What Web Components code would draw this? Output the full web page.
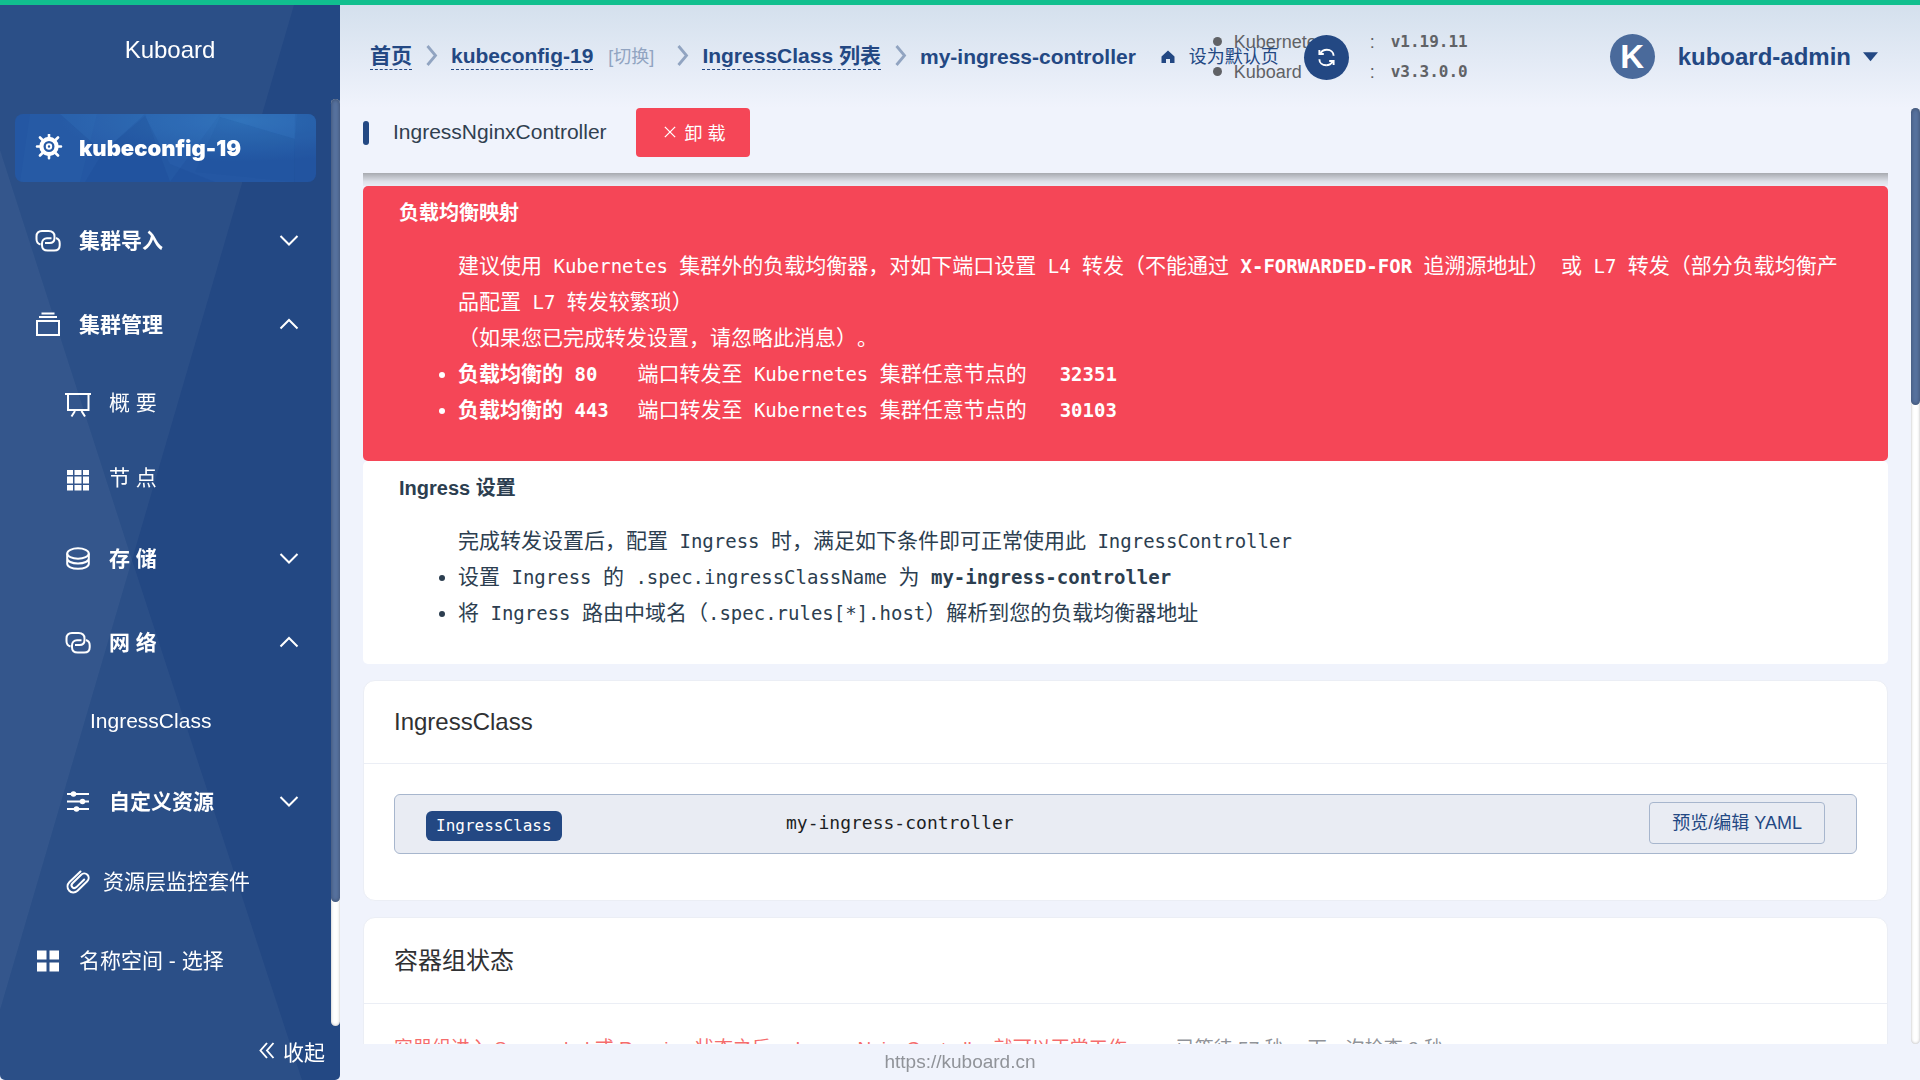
<!DOCTYPE html>
<html lang="zh-CN">
<head>
<meta charset="utf-8">
<title>Kuboard</title>
<style>
  html, body { height: 100%; }
  body {
    margin: 0;
    overflow: hidden;
    background: #f0f3fc;
    color: #2c3e50;
    font-family: "Liberation Sans", "Noto Sans CJK SC", sans-serif;
    font-size: 21px;
    text-spacing-trim: space-all;
    --primary: #234883;
    --danger: #f54657;
    --mono: "DejaVu Sans Mono", "Noto Sans CJK SC", monospace;
  }
</style>
</head>
<body>
<kb-app></kb-app>

<script>
const ICONS = {
  helm: '<g fill="none" stroke="currentColor"><circle cx="14" cy="12.500" r="7.600" stroke-width="4.200"/><circle cx="14" cy="12.500" r="2.200" stroke-width="2"/><path stroke-width="2.600" stroke-linecap="round" d="M14 .8v3M14 21.200v3M2 12.500h3M23 12.500h3M5 3.500l2.500 2.500M20.500 19l2.500 2.500M23 3.500L20.500 6M7.500 19L5 21.500"/></g>',
  link: '<g fill="none" stroke="currentColor" stroke-width="2"><path d="M6.500 17.500C3.700 16.800 2.500 14.800 2.500 12V9.500C2.500 6 4.800 4 8 4h6.500C18 4 20.500 6 20.500 9.500V11c0 3.300-2 5-5 5H11"/><path d="M22 11c2.500.8 3.700 2.700 3.700 5.200v2c0 3.300-2.300 5.300-5.500 5.300h-6.500c-3.400 0-5.700-2-5.700-5.300v-1.700c0-3.300 2-5.200 5-5.200h4.500"/></g>',
  stack: '<g fill="none" stroke="currentColor" stroke-width="2"><path d="M3 10h22v14H3zM5 6h18M7.500 2.500h13"/></g>',
  board: '<g fill="none" stroke="currentColor" stroke-width="2"><path d="M1 3h26M4 3v16h20.500V3M11 20l-3.500 5.500M17.500 20l3.500 5.500"/></g>',
  grid9: '<path fill="currentColor" d="M3 4h6v5H3zM10.500 4h7v5h-7zM19 4h6v5h-6zM3 10.500h6v7H3zM10.500 10.500h7v7h-7zM19 10.500h6v7h-6zM3 19h6v5.500H3zM10.500 19h7v5.500h-7zM19 19h6v5.500h-6z"/>',
  coins: '<g fill="none" stroke="currentColor" stroke-width="2"><ellipse cx="14" cy="8.500" rx="10.800" ry="5.200"/><path d="M3.200 8.500v5c0 2.700 4.500 5 10.800 5s10.800-2.300 10.800-5v-5M3.200 13.500v5.300c0 2.700 4.500 5 10.800 5s10.800-2.300 10.800-5v-5.300"/></g>',
  sliders: '<path stroke="currentColor" stroke-width="2" d="M3 6h22M3 13.500h22M3 21h22"/><g fill="currentColor"><circle cx="9.500" cy="6" r="2.800"/><circle cx="18.500" cy="13.500" r="2.800"/><circle cx="12.500" cy="21" r="2.800"/></g>',
  clip: '<path fill="none" stroke="currentColor" stroke-width="2" stroke-linecap="round" d="M16.500 3.500L5.500 14c-2.500 2.500-2.500 6-.5 8.500 2.300 2.500 6 2.500 8.500.3L23.200 13.300c1.900-1.900 1.900-4.700.2-6.500-1.800-1.800-4.600-1.700-6.500.1L8.500 15.200c-1.200 1.200-1.200 2.900-.1 4s2.800 1 4-.1l7.800-7.600"/>',
  grid4: '<path fill="currentColor" d="M3 3.500h9.500v9H3zM15.500 3.500H25v9h-9.500zM3 15.500h9.500v9H3zM15.500 15.500H25v9h-9.500z"/>',
  down: '<path fill="none" stroke="currentColor" stroke-width="2" d="M5.500 9L14 17.500 22.500 9"/>',
  up: '<path fill="none" stroke="currentColor" stroke-width="2" d="M5.500 17.500L14 9l8.500 8.500"/>',
  right: '<path fill="none" stroke="currentColor" stroke-width="2.800" d="M9.500 3l8 9.500-8 9.500"/>',
  fold: '<path fill="none" stroke="currentColor" stroke-width="1.900" d="M14 6L7.500 13.500 14 21M20.500 6L14 13.500l6.500 7.500"/>',
  home: '<path fill="currentColor" d="M14 1L1 13v13h9v-8h8v8h9V13z"/>',
  close: '<path fill="none" stroke="currentColor" stroke-width="3" d="M2 2l24 24M26 2L2 26"/>',
  refresh: '<g fill="none" stroke="currentColor" stroke-width="2.800"><path d="M3.500 16.500C3.500 22 8 25.500 13.500 25.500M24.500 11.500C24.500 6 20 2.500 14.500 2.500c-4 0-7.500 2-9.500 5.500"/><path d="M3.500 3v5.800H10M13.500 25.500c4 0 7.500-2 9.500-5.500M24.500 25v-5.800H18"/></g>',
  caret: '<path fill="currentColor" d="M0 6h28L14 23z"/>'
};

function define(name, html) {
  const template = document.createElement('template');
  template.innerHTML = html;
  customElements.define(name, class extends HTMLElement {
    constructor() {
      super();
      this.attachShadow({ mode: 'open' }).append(template.content.cloneNode(true));
    }
  });
}

customElements.define('kb-icon', class extends HTMLElement {
  constructor() {
    super();
    this.attachShadow({ mode: 'open' });
  }
  connectedCallback() {
    this.shadowRoot.innerHTML = `
      <style>
        :host { display: inline-block; width: 28px; height: 28px; flex: none; }
        svg { display: block; width: 100%; height: 100%; }
      </style>
      <svg viewBox="0 0 28 28" aria-hidden="true">${ICONS[this.getAttribute('name')]}</svg>`;
  }
});

customElements.define('kb-menu-item', class extends HTMLElement {
  constructor() {
    super();
    this.attachShadow({ mode: 'open' });
  }
  connectedCallback() {
    const icon = this.getAttribute('icon');
    const arrow = this.getAttribute('arrow');
    this.shadowRoot.innerHTML = `
      <style>
        :host { display: block; color: #fff; line-height: 30px; }
        a { display: flex; align-items: center; gap: 17px; height: 75px; box-sizing: border-box;
            padding: 0 28px 0 34px; color: inherit; text-decoration: none; white-space: nowrap; }
        span { flex: 1; padding-bottom: 4px; }
        :host([tall]) a { height: 84px; }
        :host([tall]) span { padding-bottom: 0; }
        :host([arrow]) { font-weight: bold; }
        :host([level="2"]) a { padding-left: 64px; }
        :host([level="3"]) a { padding-left: 90px; }
        :host([tight]) a { gap: 11px; }
        :host([tight]) span { padding-bottom: 0; }
      </style>
      <a href="#">${icon ? `<kb-icon name="${icon}"></kb-icon>` : ''}<span><slot></slot></span>${arrow ? `<kb-icon name="${arrow}"></kb-icon>` : ''}</a>`;
  }
});

define('kb-scrollbar', `
  <style>
    :host { display: block; flex: none; width: 9px; border-radius: 5px; background: #fff; box-shadow: inset 0 0 3px rgba(0,0,0,.3); }
    div { height: var(--thumb); border-radius: 5px; background: #57729f; box-shadow: inset 0 0 4px rgba(0,0,0,.35); }
  </style>
  <div></div>`);

define('kb-sidebar', `
  <style>
    :host { display: flex; flex-direction: column; position: relative; z-index: 2; width: 340px; flex: none;
            overflow: hidden; border-radius: 0 0 5px 5px; background: var(--primary); color: #fff; }
    .facets { position: absolute; inset: 0; width: 100%; height: 100%; }
    .brand { position: relative; height: 94px; box-sizing: border-box; padding-bottom: 4px; display: flex; align-items: center; justify-content: center; font-size: 24px; }
    .scroll { position: relative; display: flex; flex: 1; min-height: 0; }
    nav { flex: 1; min-width: 0; padding-top: 15px; }
    .cluster { display: flex; align-items: center; gap: 16px; position: relative; overflow: hidden;
               height: 68px; margin: 0 15px 17px; padding: 0 20px; border-radius: 8px;
               background: #2457a3; color: #fff; text-decoration: none;
               font: 900 22px/30px Inter, "DejaVu Sans", sans-serif; }
    .cluster > svg { position: absolute; inset: 0; width: 100%; height: 100%; }
    .cluster > kb-icon, .cluster > span { position: relative; }
    .fold { position: relative; display: flex; align-items: center; justify-content: flex-end; gap: 2px; height: 54px;
            padding: 0 15px 4px 0; border: 0; background: none; color: #fff; font: inherit; }
  </style>
  <svg class="facets" viewBox="0 0 340 1075" preserveAspectRatio="none" aria-hidden="true">
    <path fill="#fff" fill-opacity=".04" d="M0 0H294L132 555 302 1075H0z"/>
    <path fill="#fff" fill-opacity=".045" d="M0 145L132 555 0 1005z"/>
  </svg>
  <div class="brand">Kuboard</div>
  <div class="scroll">
    <nav>
      <a class="cluster" href="#">
        <svg viewBox="0 0 301 68" preserveAspectRatio="none" aria-hidden="true">
          <defs><radialGradient id="g" cx=".75" cy=".1" r=".6"><stop offset="0" stop-color="#2f70b8"/><stop offset="1" stop-color="#2f70b8" stop-opacity="0"/></radialGradient></defs>
          <path fill="url(#g)" d="M0 0h301v68H0z"/>
          <g fill="#4a9be0">
            <path fill-opacity=".1" d="M45 0h85L88 38z"/><path fill-opacity=".08" d="M130 0h75l-50 68z"/>
            <path fill-opacity=".08" d="M205 3l75 22 2-25h-77z"/><path fill-opacity=".05" d="M15 0L5 68h60L82 0z"/>
          </g>
          <g fill="#16408a">
            <path fill-opacity=".14" d="M88 38l42-36 25 48 45 18H70z"/><path fill-opacity=".12" d="M280 0h21v68h-22z"/>
            <path fill-opacity=".06" d="M205 3l-25 55 100 10V25z"/>
          </g>
        </svg>
        <kb-icon name="helm"></kb-icon><span>kubeconfig-19</span>
      </a>
      <kb-menu-item tall icon="link" arrow="down">集群导入</kb-menu-item>
      <kb-menu-item tall icon="stack" arrow="up">集群管理</kb-menu-item>
      <kb-menu-item level="2" icon="board">概 要</kb-menu-item>
      <kb-menu-item level="2" icon="grid9">节 点</kb-menu-item>
      <kb-menu-item level="2" tall icon="coins" arrow="down">存 储</kb-menu-item>
      <kb-menu-item level="2" tall icon="link" arrow="up">网 络</kb-menu-item>
      <kb-menu-item level="3">IngressClass</kb-menu-item>
      <kb-menu-item level="2" tall icon="sliders" arrow="down">自定义资源</kb-menu-item>
      <kb-menu-item level="2" tight icon="clip">资源层监控套件</kb-menu-item>
      <kb-menu-item tall icon="grid4">名称空间 - 选择</kb-menu-item>
    </nav>
    <kb-scrollbar style="--thumb:803px"></kb-scrollbar>
  </div>
  <button class="fold" type="button"><kb-icon name="fold"></kb-icon>收起</button>`);

define('kb-breadcrumb', `
  <style>
    :host { display: flex; align-items: center; position: relative; z-index: 1; flex: 1 1 0; min-width: 0;
            white-space: nowrap; font-weight: bold; line-height: 26px; color: var(--primary); }
    a { color: inherit; text-decoration: none; }
    .path { border-bottom: 1px dashed var(--primary); }
    .switch { margin: 0 9px 0 15px; font-size: 18px; font-weight: normal; color: #91a4c1; }
    .sep { margin: 0 5px 0 6px; color: #91a4c1; }
    .default { display: flex; align-items: center; gap: 14px; margin-left: 25px; font-size: 18px; font-weight: normal; }
    .default kb-icon { width: 14px; height: 14px; }
  </style>
  <a class="path" href="#">首页</a>
  <kb-icon class="sep" name="right"></kb-icon>
  <a class="path" href="#">kubeconfig-19</a>
  <a class="switch" href="#">[切换]</a>
  <kb-icon class="sep" name="right"></kb-icon>
  <a class="path" href="#">IngressClass 列表</a>
  <kb-icon class="sep" name="right"></kb-icon>
  <span>my-ingress-controller</span>
  <a class="default" href="#"><kb-icon name="home"></kb-icon>设为默认页</a>`);

define('kb-versions', `
  <style>
    :host { display: block; position: relative; flex: none; width: 397px; font-size: 18px; line-height: 30px; color: #606266; }
    ul { margin: 0; padding: 0; list-style: none; }
    li { display: flex; align-items: center; }
    li::before { content: ""; width: 9px; height: 9px; margin-right: 12px; border-radius: 50%; background: #606266; }
    .name { width: 136px; }
    .colon { width: 21px; }
    b { font: bold 16px/30px var(--mono); }
    button { position: absolute; top: 8px; left: 91px; width: 45px; height: 45px; padding: 0; border: 0; border-radius: 50%;
             display: flex; align-items: center; justify-content: center; background: var(--primary); color: #fff; }
    button kb-icon { width: 19px; height: 19px; }
  </style>
  <ul>
    <li><span class="name">Kubernetes</span><span class="colon">:</span><b>v1.19.11</b></li>
    <li><span class="name">Kuboard</span><span class="colon">:</span><b>v3.3.0.0</b></li>
  </ul>
  <button type="button" aria-label="刷新"><kb-icon name="refresh"></kb-icon></button>`);

define('kb-user', `
  <style>
    :host { display: block; flex: none; }
    button { display: flex; align-items: center; padding: 0; border: 0; background: none; color: var(--primary); font: bold 24px/30px "Liberation Sans", sans-serif; }
    .avatar { width: 45px; height: 45px; margin-right: 23px; border-radius: 50%; background: #4a6a9b; color: #fff; font-size: 33px; line-height: 45px; text-align: center; }
    kb-icon { width: 15px; height: 15px; margin-left: 12px; }
  </style>
  <button type="button"><span class="avatar">K</span>kuboard-admin<kb-icon name="caret"></kb-icon></button>`);

define('kb-header', `
  <style>
    :host { display: flex; align-items: center; height: 103px; box-sizing: border-box; padding: 0 42px 0 30px;
            background: linear-gradient(#d4e0ed, #f0f3fc); }
  </style>
  <kb-breadcrumb></kb-breadcrumb>
  <kb-versions></kb-versions>
  <kb-user></kb-user>`);

define('kb-title-bar', `
  <style>
    :host { display: block; }
    .bar { display: flex; align-items: center; height: 49px; padding-bottom: 16px; }
    .bar::before { content: ""; width: 6px; height: 24px; margin-right: 24px; border-radius: 3px; background: var(--primary); }
    h1 { margin: 0 29px 0 0; padding-bottom: 2px; font-size: 21px; line-height: 30px; font-weight: normal; color: #303f50; }
    button { display: flex; align-items: center; gap: 9px; height: 49px; padding: 0 24px 2px 28px; border: 0; border-radius: 4px;
             background: var(--danger); color: #fff; font: inherit; font-size: 18px; }
    button kb-icon { width: 12px; height: 12px; }
    .shade { height: 13px; background: linear-gradient(rgba(0,0,0,.3), rgba(0,0,0,.08) 65%, rgba(0,0,0,.03)); }
  </style>
  <div class="bar"><h1>IngressNginxController</h1><button type="button"><kb-icon name="close"></kb-icon>卸 载</button></div>
  <div class="shade"></div>`);

define('kb-notice', `
  <style>
    :host { display: block; padding: 12px 36px 33px; border-radius: 5px; background: #fff; color: #2c3e50; }
    :host([danger]) { background: var(--danger); color: #fff; }
    ::slotted(h2) { margin: 0 0 20px; font-size: 20px; line-height: 30px; }
    ::slotted(ul) { margin: 0; padding: 0 0 0 59px; line-height: 36px; }
  </style>
  <slot></slot>`);

define('kb-card', `
  <style>
    :host { display: block; margin-top: 16px; border: 1px solid #ebeef5; border-radius: 12px; background: #fff; }
    header { padding: 24px 30px; border-bottom: 1px solid #ebeef5; font-size: 24px; line-height: 34px; color: #303133; }
    :host([tall]) header { line-height: 37px; }
    .body { padding: 30px 30px 46px; }
  </style>
  <header><slot name="title"></slot></header>
  <div class="body"><slot></slot></div>`);

define('kb-resource-row', `
  <style>
    :host { display: flex; align-items: center; height: 58px; padding: 0 31px; border: 1px solid #a7b6cd; border-radius: 6px;
            background: #e9ecf3; font-family: var(--mono); font-size: 18px; line-height: 30px; color: #1c1f24; }
    .kind { flex: none; width: 360px; }
    .tag { display: inline-block; margin-top: 4px; padding: 0 10px; border-radius: 6px; background: var(--primary); color: #fff; font-size: 16px; line-height: 30px; }
    .name { flex: 1; padding-bottom: 2px; }
    button { height: 42px; margin-bottom: 2px; padding: 0 22px; border: 1px solid #a7b6cd; border-radius: 4px; background: none; color: var(--primary);
             font: 18px/30px "Liberation Sans", "Noto Sans CJK SC", sans-serif; }
  </style>
  <div class="kind"><span class="tag">IngressClass</span></div>
  <div class="name">my-ingress-controller</div>
  <button type="button">预览/编辑 YAML</button>`);

define('kb-content', `
  <style>
    :host { display: flex; flex: 1; min-height: 0; }
    main { flex: 1; min-width: 0; overflow: hidden; padding: 0 23px; }
    code { font-family: var(--mono); font-size: 19px; white-space: pre-wrap; }
    li.plain { list-style: none; }
    .port { display: inline-block; width: 63px; }
    .to { margin-left: 10px; }
    .wait { font-size: 19px; line-height: 30px; color: #f56c6c; }
    .wait span { margin-left: 30px; color: #909399; }
  </style>
  <main>
    <kb-title-bar></kb-title-bar>
    <kb-notice danger>
      <h2>负载均衡映射</h2>
      <ul>
        <li class="plain">建议使用<code> Kubernetes </code>集群外的负载均衡器，对如下端口设置<code> L4 </code>转发（不能通过<code> <b>X-FORWARDED-FOR</b> </code>追溯源地址）<code> </code>或<code> L7 </code>转发（部分负载均衡产品配置<code> L7 </code>转发较繁琐）</li>
        <li class="plain">（如果您已完成转发设置，请忽略此消息）。</li>
        <li><b>负载均衡的<code> </code><code class="port">80</code></b>端口转发至<code> Kubernetes </code>集群任意节点的<code class="to">  <b>32351</b></code></li>
        <li><b>负载均衡的<code> </code><code class="port">443</code></b>端口转发至<code> Kubernetes </code>集群任意节点的<code class="to">  <b>30103</b></code></li>
      </ul>
    </kb-notice>
    <kb-notice>
      <h2>Ingress 设置</h2>
      <ul>
        <li class="plain">完成转发设置后，配置<code> Ingress </code>时，满足如下条件即可正常使用此<code> IngressController</code></li>
        <li>设置<code> Ingress </code>的<code> .spec.ingressClassName </code>为<code> <b>my-ingress-controller</b></code></li>
        <li>将<code> Ingress </code>路由中域名（<code>.spec.rules[*].host</code>）解析到您的负载均衡器地址</li>
      </ul>
    </kb-notice>
    <kb-card>
      <span slot="title">IngressClass</span>
      <kb-resource-row></kb-resource-row>
    </kb-card>
    <kb-card tall>
      <span slot="title">容器组状态</span>
      <div class="wait">容器组进入 Succeeded 或 Running 状态之后， IngressNginxController 就可以正常工作。<span>已等待 57 秒， 下一次检查 2 秒</span></div>
    </kb-card>
  </main>
  <kb-scrollbar style="--thumb:297px"></kb-scrollbar>`);

define('kb-app', `
  <style>
    :host { display: flex; flex-direction: column; height: 100vh; }
    .top { flex: none; height: 5px; background: #11bf8f; }
    .layout { display: flex; flex: 1; min-height: 0; }
    .page { display: flex; flex-direction: column; flex: 1; min-width: 0; padding-bottom: 36px; }
    footer { position: fixed; left: 0; right: 0; bottom: 0; text-align: center; font-size: 19px; line-height: 36px; color: #909399; }
  </style>
  <div class="top"></div>
  <div class="layout">
    <kb-sidebar></kb-sidebar>
    <div class="page">
      <kb-header></kb-header>
      <kb-content></kb-content>
    </div>
  </div>
  <footer>https://kuboard.cn</footer>`);
</script>
</body>
</html>
